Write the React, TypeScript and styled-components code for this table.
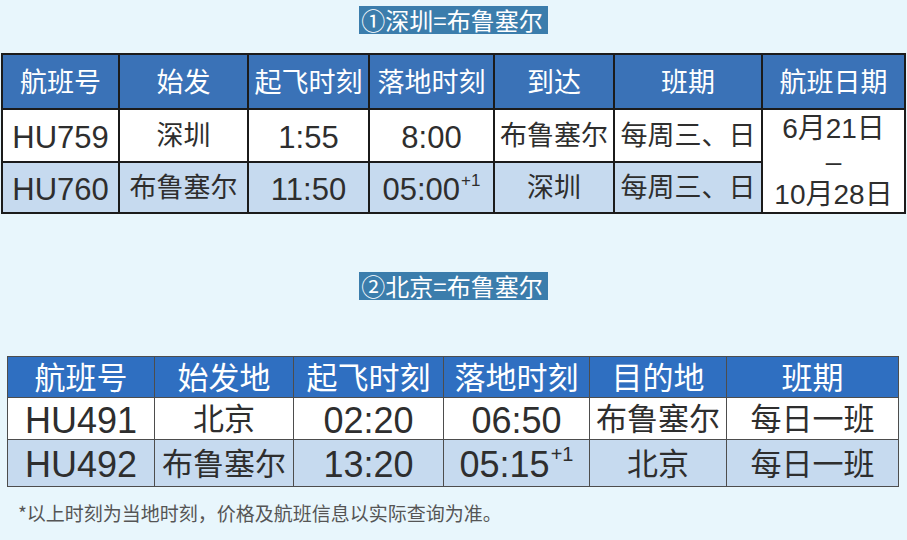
import React from 'react'
import styled, { createGlobalStyle, css } from 'styled-components'

const GlobalStyle = createGlobalStyle`
  html, body {
    margin: 0;
    padding: 0;
    background: #e8f6fc;
  }
  body {
    font-family: 'Liberation Sans', 'Noto Sans CJK SC', sans-serif;
  }
`

const Page = styled.div`
  width: 907px;
  height: 540px;
  background: #e8f6fc;
  display: flex;
  flex-direction: column;
  overflow: hidden;
`

const Title = styled.div<{ $top: number }>`
  align-self: center;
  margin-top: ${(p) => p.$top}px;
  padding: 0 5px 0 2px;
  height: 28px;
  line-height: 28px;
  background: #3b7dac;
  color: #fff;
  font-family: 'Noto Sans CJK SC', sans-serif;
  font-size: 24px;
  white-space: nowrap;
`

type Variant = 'a' | 'b'

const sizes = {
  a: { head: 27, cjk: 27, latin: 31, mixed: 28, sup: 17 },
  b: { head: 31, cjk: 31, latin: 36, mixed: 32, sup: 20 },
}

const Table = styled.table<{ $variant: Variant; $top: number; $left: number; $width: number }>`
  margin-top: ${(p) => p.$top}px;
  margin-left: ${(p) => p.$left}px;
  width: ${(p) => p.$width}px;
  border-collapse: collapse;
  table-layout: fixed;
  color: #2e2e2e;

  th,
  td {
    padding: 0;
    text-align: center;
    vertical-align: middle;
    white-space: nowrap;
    line-height: 1;
    ${(p) =>
      p.$variant === 'a'
        ? css`
            border: 2px solid #1b1b1b;
          `
        : css`
            border: 1px solid #4d4d4d;
          `}
  }
`

const Row = styled.tr<{ $height: number; $shade?: boolean }>`
  height: ${(p) => p.$height}px;
  background: ${(p) => (p.$shade ? '#c6daef' : '#ffffff')};
`

const HeadRow = styled.tr<{ $height: number; $variant: Variant }>`
  height: ${(p) => p.$height}px;
  background: ${(p) => (p.$variant === 'a' ? '#3a72b7' : '#2f6fc1')};
`

const HeadCell = styled.th<{ $variant: Variant }>`
  color: #fff;
  font-weight: 400;
  font-family: 'Noto Sans CJK SC', sans-serif;
  font-size: ${(p) => sizes[p.$variant].head}px;
  && {
    padding-bottom: 3px;
  }
`

type Kind = 'cjk' | 'latin' | 'mixed'

const Cell = styled.td<{ $variant: Variant; $kind: Kind }>`
  font-size: ${(p) => sizes[p.$variant][p.$kind]}px;
  font-family: ${(p) =>
    p.$kind === 'cjk'
      ? "'Noto Sans CJK SC', sans-serif"
      : "'Liberation Sans', 'Noto Sans CJK SC', sans-serif"};
  && {
    ${(p) =>
      p.$kind === 'cjk'
        ? css`
            padding-bottom: 4px;
          `
        : css`
            padding-top: 4px;
          `}
  }
`

const DateCell = styled.td`
  background: #fff;
  font-size: 28px;
  font-family: 'Liberation Sans', 'Noto Sans CJK SC', sans-serif;
`

const DateLine = styled.div`
  height: 33px;
  line-height: 33px;
`

const Sup = styled.sup<{ $variant: Variant }>`
  font-size: ${(p) => sizes[p.$variant].sup}px;
  line-height: 0;
  vertical-align: ${(p) => (p.$variant === 'a' ? '14px' : '16px')};
  margin-left: 1px;
`

const Note = styled.div`
  margin: 13px 0 0 18px;
  line-height: 26px;
  font-family: 'Noto Sans CJK SC', sans-serif;
  font-size: 19px;
  color: #555;
  white-space: nowrap;
`

type Flight = {
  no: string
  from: string
  dep: string
  arr: string
  plus?: boolean
  to: string
  days: string
}

const route1: Flight[] = [
  { no: 'HU759', from: '深圳', dep: '1:55', arr: '8:00', to: '布鲁塞尔', days: '每周三、日' },
  { no: 'HU760', from: '布鲁塞尔', dep: '11:50', arr: '05:00', plus: true, to: '深圳', days: '每周三、日' },
]

const route2: Flight[] = [
  { no: 'HU491', from: '北京', dep: '02:20', arr: '06:50', to: '布鲁塞尔', days: '每日一班' },
  { no: 'HU492', from: '布鲁塞尔', dep: '13:20', arr: '05:15', plus: true, to: '北京', days: '每日一班' },
]

const cols1 = [117, 129, 121, 125, 120, 148, 143]
const cols2 = [147, 139, 150, 146, 137, 172]

const head1 = ['航班号', '始发', '起飞时刻', '落地时刻', '到达', '班期', '航班日期']
const head2 = ['航班号', '始发地', '起飞时刻', '落地时刻', '目的地', '班期']

const FlightCells = ({ f, v }: { f: Flight; v: Variant }) => (
  <>
    <Cell $variant={v} $kind="latin">{f.no}</Cell>
    <Cell $variant={v} $kind="cjk">{f.from}</Cell>
    <Cell $variant={v} $kind="latin">{f.dep}</Cell>
    <Cell $variant={v} $kind="latin">
      {f.arr}
      {f.plus && <Sup $variant={v}>+1</Sup>}
    </Cell>
    <Cell $variant={v} $kind="cjk">{f.to}</Cell>
    <Cell $variant={v} $kind="cjk">{f.days}</Cell>
  </>
)

export default function App() {
  return (
    <>
      <GlobalStyle />
      <Page>
        <Title $top={6}>①深圳=布鲁塞尔</Title>
        <Table $variant="a" $top={19} $left={1} $width={903}>
          <colgroup>
            {cols1.map((w, i) => (
              <col key={i} style={{ width: w }} />
            ))}
          </colgroup>
          <tbody>
            <HeadRow $height={55} $variant="a">
              {head1.map((h) => (
                <HeadCell key={h} $variant="a">
                  {h}
                </HeadCell>
              ))}
            </HeadRow>
            <Row $height={53}>
              <FlightCells f={route1[0]} v="a" />
              <DateCell rowSpan={2}>
                <DateLine>6月21日</DateLine>
                <DateLine>–</DateLine>
                <DateLine>10月28日</DateLine>
              </DateCell>
            </Row>
            <Row $height={51} $shade>
              <FlightCells f={route1[1]} v="a" />
            </Row>
          </tbody>
        </Table>

        <Title $top={58}>②北京=布鲁塞尔</Title>
        <Table $variant="b" $top={56} $left={7} $width={891}>
          <colgroup>
            {cols2.map((w, i) => (
              <col key={i} style={{ width: w }} />
            ))}
          </colgroup>
          <tbody>
            <HeadRow $height={41} $variant="b">
              {head2.map((h) => (
                <HeadCell key={h} $variant="b">
                  {h}
                </HeadCell>
              ))}
            </HeadRow>
            <Row $height={42}>
              <FlightCells f={route2[0]} v="b" />
            </Row>
            <Row $height={47} $shade>
              <FlightCells f={route2[1]} v="b" />
            </Row>
          </tbody>
        </Table>

        <Note>*以上时刻为当地时刻，价格及航班信息以实际查询为准。</Note>
      </Page>
    </>
  )
}
